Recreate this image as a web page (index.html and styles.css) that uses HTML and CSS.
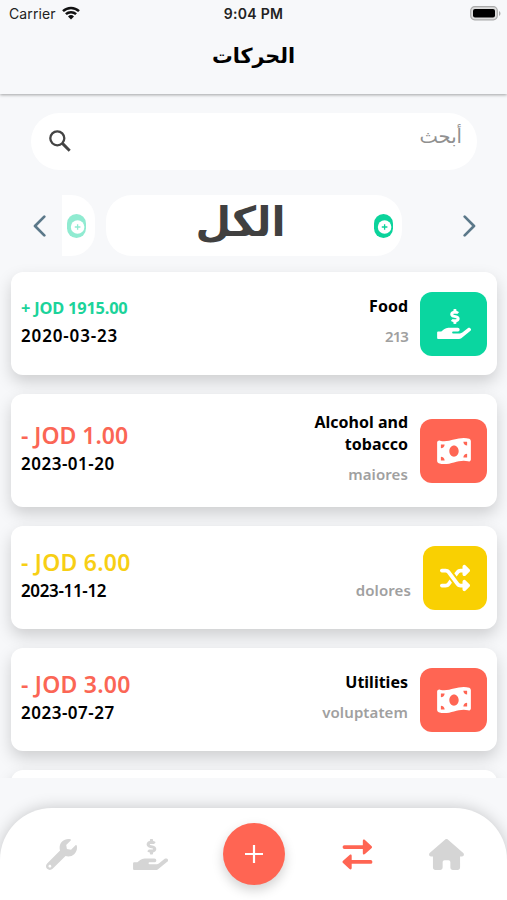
FILE: index.html
```html
<!DOCTYPE html>
<html lang="ar">
<head>
    <meta charset="UTF-8">
    <meta name="viewport" content="width=device-width, initial-scale=1.0">
    <title>الحركات</title>
    <link rel="stylesheet" href="styles.css">
</head>
<body>
    <svg class="symbols">
        <symbol id="hand" viewBox="0 0 576 512"><path d="M271.06 144.3l54.27 14.3a8.59 8.59 0 0 1 6.63 8.1c0 4.6-4.09 8.4-9.12 8.4h-35.6a30 30 0 0 1-11.19-2.2c-5.24-2.2-11.28-1.7-15.3 2l-19 17.5a11.68 11.68 0 0 0-2.25 2.66 11.42 11.42 0 0 0 3.88 15.74 83.77 83.77 0 0 0 34.51 11.5V240c0 8.8 7.83 16 17.37 16h17.37c9.55 0 17.38-7.2 17.38-16v-17.6c32.93-3.6 57.84-31 53.5-63-3.15-23-22.46-41.3-46.56-47.7L282.68 97.4a8.59 8.59 0 0 1-6.63-8.1c0-4.6 4.09-8.4 9.12-8.4h35.6A30 30 0 0 1 332 83.1c5.23 2.2 11.28 1.7 15.3-2l19-17.5a11.31 11.31 0 0 0 2.17-2.6 11.43 11.43 0 0 0-3.84-15.78 83.82 83.82 0 0 0-34.52-11.5V16c0-8.8-7.82-16-17.37-16h-17.37C285.82 0 278 7.2 278 16v17.6c-32.89 3.6-57.85 31-53.51 63 3.14 23 22.51 41.3 46.57 47.7zM565.27 328.1c-11.8-10.7-30.2-10-42.6 0L430.27 402a63.64 63.64 0 0 1-40 14H272a16 16 0 0 1 0-32h78.29c15.9 0 30.71-10.9 33.25-26.6a31.2 31.2 0 0 0 .46-5.46A32 32 0 0 0 352 320H192a117.66 117.66 0 0 0-74.1 26.29L71.4 384H16a16 16 0 0 0-16 16v96a16 16 0 0 0 16 16h356.77a64 64 0 0 0 40-14L564 377a32 32 0 0 0 1.28-48.9z"/></symbol>
        <symbol id="money" viewBox="0 0 576 512"><path d="M0 112.5V422.3c0 18 10.1 35 27 41.3c87 32.5 174 10.3 261-11.9c79.8-20.3 159.6-40.7 239.3-18.9c23 6.3 48.7-9.5 48.7-33.4V89.7c0-18-10.1-35-27-41.3C462 15.9 375 38.1 288 60.3C208.2 80.6 128.4 100.9 48.7 79.1C25.6 72.8 0 88.6 0 112.5zM288 352c-44.2 0-80-43-80-96s35.8-96 80-96s80 43 80 96s-35.8 96-80 96zM64 352c35.3 0 64 28.7 64 64H64V352zm64-208c0 35.3-28.7 64-64 64V144h64zM512 304v64H448c0-35.3 28.7-64 64-64zM448 96h64v64c-35.3 0-64-28.7-64-64z"/></symbol>
        <symbol id="shuffle" viewBox="0 0 512 512"><path d="M403.8 34.4c12-5 25.7-2.2 34.9 6.9l64 64c6 6 9.4 14.1 9.4 22.6s-3.4 16.6-9.4 22.6l-64 64c-9.2 9.2-22.9 11.9-34.9 6.9s-19.8-16.6-19.8-29.6V160H352c-10.1 0-19.6 4.7-25.6 12.8L284 229.3 244 176l31.2-41.6C293.3 110.2 321.8 96 352 96h32V64c0-12.9 7.8-24.6 19.8-29.6zM164 282.7L204 336l-31.2 41.6C154.7 401.8 126.2 416 96 416H32c-17.7 0-32-14.3-32-32s14.3-32 32-32H96c10.1 0 19.6-4.7 25.6-12.8L164 282.7zm274.6 188c-9.2 9.2-22.9 11.9-34.9 6.9s-19.8-16.6-19.8-29.6V416H352c-30.2 0-58.7-14.2-76.8-38.4L121.6 172.8c-6-8.1-15.5-12.8-25.6-12.8H32c-17.7 0-32-14.3-32-32s14.3-32 32-32H96c30.2 0 58.7 14.2 76.8 38.4L326.4 339.2c6 8.1 15.5 12.8 25.6 12.8h32V320c0-12.9 7.8-24.6 19.8-29.6s25.7-2.2 34.9 6.9l64 64c6 6 9.4 14.1 9.4 22.6s-3.4 16.6-9.4 22.6l-64 64z"/></symbol>
        <symbol id="coin" viewBox="0 0 20 24"><rect width="19" height="24" rx="9.5"/><circle class="coin-hole" cx="10.6" cy="13" r="6.8"/><path d="M10.6 10.2v5.6M7.8 13h5.6" stroke="currentColor" stroke-width="1.3"/></symbol>
    </svg>

    <header class="header">
        <div class="status-bar">
            <div class="carrier">
                <span>Carrier</span>
                <svg class="wifi" viewBox="0 0 18 14"><path d="M1 5.2a11.6 11.6 0 0 1 16 0M3.9 8.2a7.4 7.4 0 0 1 10.2 0" fill="none" stroke="#111" stroke-width="2.5"/><path d="M6 10.4a4.4 4.4 0 0 1 6 0L9 13.6z"/></svg>
            </div>
            <span class="time">9:04 PM</span>
            <svg class="battery" viewBox="0 0 31 15"><rect x=".7" y=".7" width="26.6" height="13.1" rx="4" fill="#ddd" stroke="#aaa" stroke-width="1.2"/><rect x="3" y="3" width="22" height="8.6" rx="2" fill="#000"/><path d="M29 5c2 1 2 4 0 5z" fill="#aaa"/></svg>
        </div>
        <h1 dir="rtl">الحركات</h1>
    </header>

    <div class="search">
        <svg class="search-icon" viewBox="0 0 22 22"><circle cx="8.3" cy="8.3" r="7" stroke-width="2.3"/><path d="M13.4 13.4l7.3 7.3" stroke-width="2.9"/></svg>
        <span class="placeholder" dir="rtl">أبحث</span>
    </div>

    <div class="filter">
        <svg class="chevron" viewBox="0 0 13 22"><path d="M11.3 1.6L2 11l9.3 9.4"/></svg>
        <div class="pills">
            <div class="pill pill-side"><svg class="coin"><use href="#coin"/></svg></div>
            <div class="pill pill-main">
                <span class="pill-label" dir="rtl">الكل</span>
                <svg class="coin"><use href="#coin"/></svg>
            </div>
        </div>
        <svg class="chevron" viewBox="0 0 13 22"><path d="M1.7 1.6L11 11l-9.3 9.4"/></svg>
    </div>

    <main class="list">
        <div class="card">
            <div class="amounts">
                <div class="amount small green">+ JOD 1915.00</div>
                <div class="date wide">2020-03-23</div>
            </div>
            <div class="info">
                <div class="title">Food</div>
                <div class="note tight">213</div>
            </div>
            <div class="icon bg-green"><svg><use href="#hand"/></svg></div>
        </div>
        <div class="card tall">
            <div class="amounts">
                <div class="amount red">- JOD 1.00</div>
                <div class="date">2023-01-20</div>
            </div>
            <div class="info">
                <div class="title">Alcohol and tobacco</div>
                <div class="note">maiores</div>
            </div>
            <div class="icon bg-red"><svg><use href="#money"/></svg></div>
        </div>
        <div class="card">
            <div class="amounts">
                <div class="amount wide yellow">- JOD 6.00</div>
                <div class="date tight">2023-11-12</div>
            </div>
            <div class="info">
                <div class="title"></div>
                <div class="note">dolores</div>
            </div>
            <div class="icon narrow bg-yellow"><svg><use href="#shuffle"/></svg></div>
        </div>
        <div class="card">
            <div class="amounts">
                <div class="amount wide red">- JOD 3.00</div>
                <div class="date">2023-07-27</div>
            </div>
            <div class="info">
                <div class="title">Utilities</div>
                <div class="note">voluptatem</div>
            </div>
            <div class="icon bg-red"><svg><use href="#money"/></svg></div>
        </div>
        <div class="card"></div>
    </main>

    <nav class="tabs">
        <svg class="tab wrench" viewBox="0 0 512 512"><path d="M507.73 109.1c-2.24-9.03-13.54-12.09-20.12-5.51l-74.36 74.36-67.88-11.31-11.31-67.88 74.36-74.36c6.62-6.62 3.43-17.9-5.66-20.16-47.38-11.74-99.55.91-136.58 37.93-39.64 39.64-50.55 97.1-34.05 147.2L18.74 402.76c-24.99 24.99-24.99 65.51 0 90.5 24.99 24.99 65.51 24.99 90.5 0l213.21-213.21c50.12 16.71 107.47 5.68 147.37-34.22 37.07-37.07 49.7-89.32 37.91-136.73zM64 472c-13.25 0-24-10.75-24-24 0-13.26 10.75-24 24-24s24 10.74 24 24c0 13.25-10.75 24-24 24z"/></svg>
        <svg class="tab"><use href="#hand"/></svg>
        <button class="add"><svg viewBox="0 0 18 18"><path d="M9 0v18M0 9h18"/></svg></button>
        <svg class="tab swap" viewBox="0 0 32 32"><path d="M2.5 8.3h20M29.5 23.7h-20" stroke="currentColor" stroke-width="3.8" stroke-linecap="round"/><path d="M21.5 2c0-1.4 1.2-1.8 2.2-.9l6.7 6c.8.8.8 1.7 0 2.5l-6.7 6c-1 .9-2.2.5-2.2-.9zM10 17.3c0-1.4-1.2-1.8-2.2-.9l-6.7 6c-.8.8-.8 1.7 0 2.5l6.7 6c1 .9 2.2.5 2.2-.9z"/></svg>
        <svg class="tab" viewBox="0 0 576 512"><path d="M575.8 255.5c0 18-15 32.1-32 32.1h-32l.7 160.2c0 2.7-.2 5.4-.5 8.1V472c0 22.1-17.9 40-40 40H456c-1.1 0-2.2 0-3.3-.1c-1.4 .1-2.8 .1-4.2 .1H416 392c-22.1 0-40-17.9-40-40V448 384c0-17.7-14.3-32-32-32H256c-17.7 0-32 14.3-32 32v64 24c0 22.1-17.9 40-40 40H160 128.1c-1.5 0-3-.1-4.5-.2c-1.2 .1-2.4 .2-3.6 .2H104c-22.1 0-40-17.9-40-40V360c0-.9 0-1.9 .1-2.8V287.6H32c-18 0-32-14-32-32.1c0-9 3-17 10-24L266.4 8c7-7 15-8 22-8s15 2 21 7L564.8 231.5c8 7 12 15 11 24z"/></svg>
    </nav>
</body>
</html>
```
FILE: styles.css
```css
* {
    box-sizing: border-box;
}

body {
    margin: 0;
    height: 900px;
    overflow: hidden;
    display: flex;
    flex-direction: column;
    font-family: "Noto Sans", "DejaVu Sans", sans-serif;
    background-color: #f7f8fa;
    color: #000;
}

svg {
    display: block;
    fill: currentColor;
}

.symbols {
    position: absolute;
    width: 0;
    height: 0;
}

.header {
    height: 94px;
    flex-shrink: 0;
    box-shadow: 0 1px 3px rgba(0, 0, 0, 0.35);
}

.status-bar {
    display: grid;
    grid-template-columns: 1fr auto 1fr;
    align-items: center;
    height: 28px;
    padding: 0 6px 0 9px;
    font-family: Inter, sans-serif;
    font-size: 14px;
    color: #222;
}

.carrier {
    display: flex;
    align-items: center;
    gap: 6px;
    margin-top: -2px;
    letter-spacing: 0.1px;
}

.wifi {
    width: 18px;
    height: 14px;
    color: #111;
}

.time {
    margin: -2px 3px 0 0;
    font-weight: 600;
    letter-spacing: 0.3px;
}

.battery {
    width: 31px;
    height: 15px;
    justify-self: end;
    margin-top: -1px;
}

h1 {
    margin: 13px 0 0;
    font-family: "DejaVu Sans", sans-serif;
    font-size: 20.7px;
    line-height: 30px;
    text-align: center;
}

.search {
    display: flex;
    justify-content: space-between;
    height: 57px;
    margin: 19px 30px 0 31px;
    padding: 17px 15px 0 18px;
    flex-shrink: 0;
    border-radius: 29px;
    background-color: #fff;
}

.search-icon {
    width: 22px;
    height: 22px;
    fill: none;
    stroke: #444;
}

.placeholder {
    margin-top: -7px;
    font-family: "DejaVu Sans", sans-serif;
    font-size: 19.5px;
    line-height: 28px;
    color: #909090;
}

.filter {
    display: flex;
    align-items: center;
    justify-content: space-between;
    height: 61px;
    margin: 25px 31px 0 33px;
    flex-shrink: 0;
}

.chevron {
    width: 13px;
    height: 22px;
    fill: none;
    stroke: #5b7889;
    stroke-width: 2.7;
    stroke-linecap: round;
    stroke-linejoin: round;
}

.pills {
    display: flex;
    gap: 11px;
    width: 386px;
}

.pill {
    display: flex;
    align-items: center;
    height: 61px;
    background-color: #fff;
    color: #0bd39b;
}

.pill-side {
    width: 33px;
    padding-left: 5px;
    border-radius: 0 24px 24px 0;
}

.pill-side .coin {
    opacity: 0.45;
}

.pill-main {
    width: 296px;
    padding-right: 8px;
    justify-content: flex-end;
    gap: 88px;
    border-radius: 26px;
}

.pill-label {
    margin-top: -7px;
    font-family: "DejaVu Sans", sans-serif;
    font-size: 41px;
    line-height: 50px;
    font-weight: bold;
    color: #404040;
}

.coin {
    width: 20px;
    height: 24px;
}

.coin-hole {
    fill: #fff;
}

.list {
    display: flex;
    flex-direction: column;
    gap: 19px;
    height: 522px;
    padding: 16px 10px 0 11px;
    flex-shrink: 0;
    overflow: hidden;
}

.card {
    display: flex;
    align-items: center;
    height: 103px;
    padding: 0 10px;
    flex-shrink: 0;
    border-radius: 12px;
    background-color: #fff;
    box-shadow: 0 7px 16px rgba(0, 0, 0, 0.17);
}

.tall {
    height: 113px;
}

.amounts {
    flex: 1;
    margin-top: -3px;
    font-weight: 600;
}

.amount {
    font-size: 23px;
    line-height: 30px;
}

.amount.wide {
    letter-spacing: 0.25px;
}

.small {
    font-size: 16.4px;
    line-height: 28px;
    font-weight: bold;
    letter-spacing: -0.2px;
}

.date {
    font-size: 17px;
    line-height: 28px;
    letter-spacing: 0.5px;
}

.date.wide {
    letter-spacing: 0.85px;
}

.date.tight {
    letter-spacing: -0.35px;
}

.info {
    width: 110px;
    margin: -6px 12px 0 0;
    text-align: right;
}

.title {
    min-height: 22px;
    font-size: 16px;
    line-height: 22px;
    font-weight: bold;
}

.note {
    margin-top: 8px;
    font-size: 15px;
    line-height: 22px;
    font-weight: 600;
    letter-spacing: 0.1px;
    color: #a0a0a0;
}

.note.tight {
    letter-spacing: -0.9px;
}

.icon {
    display: flex;
    align-items: center;
    justify-content: center;
    width: 67px;
    height: 64px;
    border-radius: 12px;
    color: #fff;
}

.icon svg {
    width: 34px;
    height: 30px;
}

.narrow {
    width: 64px;
}

.green {
    color: #1bd39a;
}

.red {
    color: #fb6655;
}

.yellow {
    color: #f7cf14;
}

.bg-green {
    background-color: #0ad6a0;
}

.bg-red {
    background-color: #ff6553;
}

.bg-yellow {
    background-color: #f9d002;
}

.tabs {
    display: flex;
    align-items: center;
    justify-content: space-between;
    height: 92px;
    margin-top: 30px;
    padding: 0 43px 0 46px;
    flex-shrink: 0;
    border-radius: 52px 52px 0 0;
    background-color: #fff;
    box-shadow: 0 0 16px rgba(0, 0, 0, 0.2);
}

.tab {
    width: 35px;
    height: 31px;
    color: #d5d5d5;
}

.wrench {
    width: 31px;
}

.swap {
    width: 31px;
    color: #ff6553;
}

.add {
    display: flex;
    align-items: center;
    justify-content: center;
    width: 62px;
    height: 62px;
    margin: 0 1px 0 -1px;
    padding: 0;
    border: none;
    border-radius: 50%;
    background-color: #ff6553;
    box-shadow: 0 5px 12px rgba(0, 0, 0, 0.18);
}

.add svg {
    width: 18px;
    height: 18px;
    stroke: #fff;
    stroke-width: 2.2;
}
```
